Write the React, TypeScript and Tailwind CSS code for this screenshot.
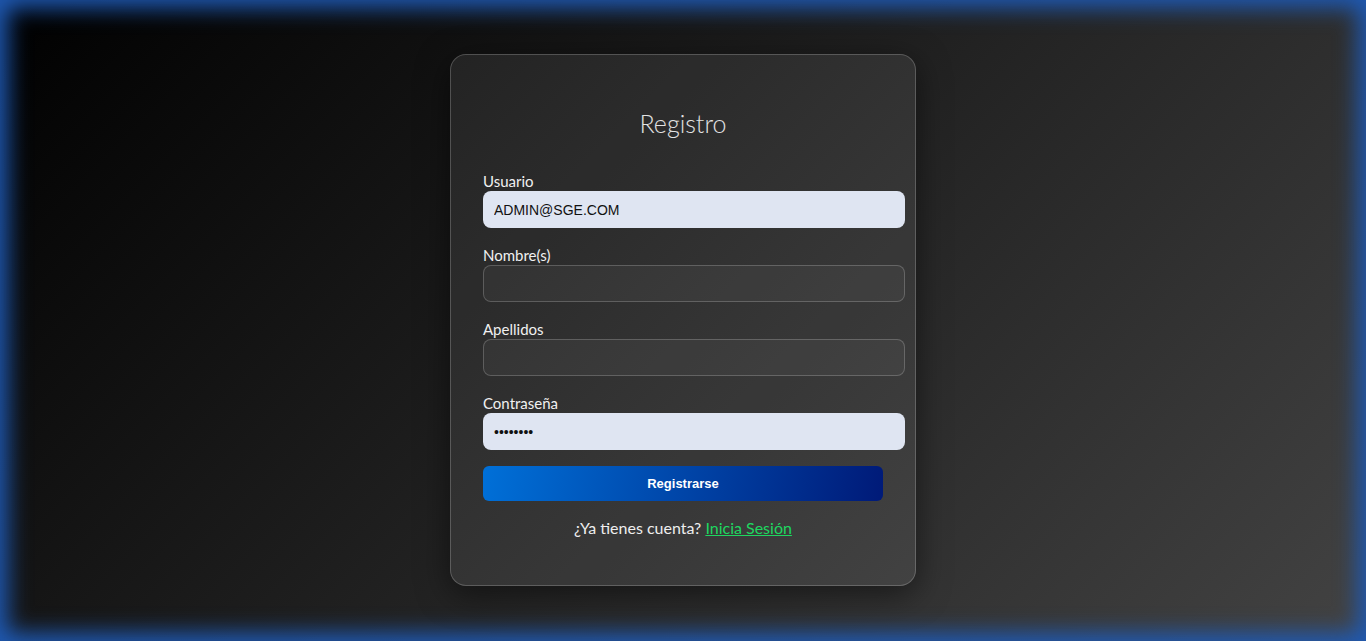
import { useState } from 'react';

const labelCls = 'block text-[15px] leading-[20px] text-[#f0f0f0]';
const filledInput =
  'block w-[422px] h-[37px] rounded-lg bg-[#dfe5f2] px-[11px] text-[14px] text-[#111] outline-none font-["Liberation_Sans",Arial,sans-serif]';
const emptyInput =
  'block w-[422px] h-[37px] rounded-lg border border-white/20 bg-white/[0.04] px-[11px] text-[14px] text-white outline-none font-["Liberation_Sans",Arial,sans-serif]';

export default function App() {
  const [usuario, setUsuario] = useState('ADMIN@SGE.COM');
  const [nombre, setNombre] = useState('');
  const [apellidos, setApellidos] = useState('');
  const [pass, setPass] = useState('12345678');

  return (
    <div className='h-[641px] w-full flex items-center justify-center bg-[linear-gradient(135deg,#000000,#434343)] shadow-[inset_0_0_22px_8px_#1f5ab4] font-["Lato","Noto_Sans",sans-serif]'>
      <div className="w-[466px] h-[532px] -mt-px rounded-[16px] border border-white/20 bg-white/[0.08] shadow-[0_8px_32px_rgba(0,0,0,0.5)] pt-[50px] pl-[32px]">
        <h2 className="text-center pr-[32px] text-[25px] leading-[36px] font-light text-[#e2e2e2]">Registro</h2>

        <form className="mt-[30px]" onSubmit={(e) => e.preventDefault()}>
          <label className={labelCls}>Usuario</label>
          <input className={filledInput} value={usuario} onChange={(e) => setUsuario(e.target.value)} />

          <label className={`${labelCls} mt-[17px]`}>Nombre(s)</label>
          <input className={emptyInput} value={nombre} onChange={(e) => setNombre(e.target.value)} />

          <label className={`${labelCls} mt-[17px]`}>Apellidos</label>
          <input className={emptyInput} value={apellidos} onChange={(e) => setApellidos(e.target.value)} />

          <label className={`${labelCls} mt-[17px]`}>Contraseña</label>
          <input type="password" className={filledInput} value={pass} onChange={(e) => setPass(e.target.value)} />

          <button
            type="submit"
            className='mt-[16px] block w-[400px] h-[35px] rounded-md bg-[linear-gradient(100deg,#0070d8,#001a78)] text-[13px] font-bold text-white font-["Liberation_Sans",Arial,sans-serif]'
          >
            Registrarse
          </button>
        </form>

        <p className="mt-[15px] pr-[32px] text-center text-[16px] leading-[24px] text-[#eeeeee]">
          ¿Ya tienes cuenta?{' '}
          <a href="#" className="text-[#1ed760] underline">
            Inicia Sesión
          </a>
        </p>
      </div>
    </div>
  );
}
